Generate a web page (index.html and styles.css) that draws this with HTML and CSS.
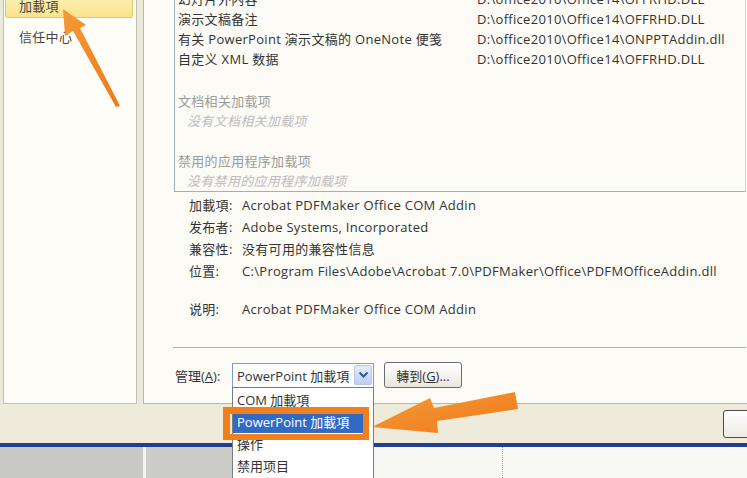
FILE: index.html
```html
<!DOCTYPE html>
<html lang="zh-CN">
<head>
    <meta charset="UTF-8">
    <meta name="viewport" content="width=device-width, initial-scale=1.0">
    <title>PowerPoint 选项 - 加载项</title>
    <link rel="stylesheet" href="styles.css">
</head>
<body>
    <div class="screen">
        <div class="dialog">
            <aside class="nav">
                <div class="nav-item selected">加載項</div>
                <div class="nav-item">信任中心</div>
            </aside>

            <main class="panel">
                <div class="addin-list">
                    <div class="row"><span class="name">幻灯片外内容</span><span class="path">D:\office2010\Office14\OFFRHD.DLL</span></div>
                    <div class="row"><span class="name">演示文稿备注</span><span class="path">D:\office2010\Office14\OFFRHD.DLL</span></div>
                    <div class="row"><span class="name">有关 PowerPoint 演示文稿的 OneNote 便笺</span><span class="path">D:\office2010\Office14\ONPPTAddin.dll</span></div>
                    <div class="row"><span class="name">自定义 XML 数据</span><span class="path">D:\office2010\Office14\OFFRHD.DLL</span></div>

                    <div class="group first">文档相关加载项</div>
                    <div class="empty">没有文档相关加载项</div>
                    <div class="group">禁用的应用程序加载项</div>
                    <div class="empty">没有禁用的应用程序加载项</div>
                </div>

                <div class="details">
                    <div class="detail"><span class="label">加載項:</span><span>Acrobat PDFMaker Office COM Addin</span></div>
                    <div class="detail"><span class="label">发布者:</span><span>Adobe Systems, Incorporated</span></div>
                    <div class="detail"><span class="label">兼容性:</span><span>没有可用的兼容性信息</span></div>
                    <div class="detail"><span class="label">位置:</span><span>C:\Program Files\Adobe\Acrobat 7.0\PDFMaker\Office\PDFMOfficeAddin.dll</span></div>
                    <div class="detail desc"><span class="label">说明:</span><span>Acrobat PDFMaker Office COM Addin</span></div>
                </div>

                <div class="manage">
                    <span class="manage-label">管理(<u>A</u>):</span>
                    <div class="combo">
                        <span class="combo-text">PowerPoint 加載項</span>
                        <span class="combo-btn">
                            <svg width="11" height="8" viewBox="0 0 11 8"><polyline points="1.5,1.5 5.5,5.5 9.5,1.5" fill="none" stroke="#3b5787" stroke-width="2"/></svg>
                        </span>
                    </div>
                    <button class="go-btn">轉到(<u>G</u>)...</button>
                </div>
            </main>
        </div>

        <div class="footer">
            <button class="footer-btn"></button>
        </div>
        <div class="blue-line"></div>
        <div class="below">
            <div class="below-a"></div>
            <div class="below-sep"></div>
            <div class="below-b"></div>
            <div class="below-c"></div>
            <div class="below-d"></div>
        </div>

        <!-- open dropdown of the manage combobox -->
        <ul class="dropdown">
            <li class="opt">COM 加載項</li>
            <li class="opt active">PowerPoint 加載項</li>
            <li class="opt">操作</li>
            <li class="opt">禁用项目</li>
        </ul>

        <!-- annotation marks -->
        <div class="mark-box"></div>
        <svg class="marks" width="747" height="478" viewBox="0 0 747 478">
            <defs>
                <linearGradient id="og" x1="0" y1="0" x2="1" y2="1">
                    <stop offset="0" stop-color="#f59a3a"/>
                    <stop offset="1" stop-color="#ee7a18"/>
                </linearGradient>
            </defs>
            <polygon points="63,9 86,25 80,28 120,106 116,107 73,31 65,36" fill="url(#og)"/>
            <polygon points="372,427 430,398 434,408 515,392 518,409 437,421 438,433" fill="url(#og)"/>
        </svg>
    </div>
</body>
</html>
```

FILE: styles.css
```css
* {
    box-sizing: border-box;
}
body {
    margin: 0;
    width: 747px;
    height: 478px;
    overflow: hidden;
    background-color: #f0ede2;
    font-family: "Open Sans", "Noto Sans CJK SC", sans-serif;
    font-size: 13px;
    letter-spacing: 0.3px;
    color: #333;
}
.screen {
    position: relative;
    width: 747px;
    height: 478px;
    overflow: hidden;
}
.dialog {
    display: flex;
    height: 404px;
    padding-left: 3px;
    gap: 6px;
    background-color: #ebe8dc;
}
.nav {
    width: 134px;
    flex-shrink: 0;
    border: 1px solid #c3c0b1;
    border-top: none;
    background-color: #fffdf7;
    padding: 0 3px 0 1px;
}
.nav-item {
    height: 24px;
    line-height: 22px;
    padding-left: 13px;
    border: 1px solid transparent;
    color: #444;
    margin-bottom: 7px;
}
.nav-item.selected {
    margin-top: -6px;
    background: linear-gradient(#fdf3b8, #fbe28b);
    border-color: #e9c462;
    border-radius: 2px;
}
.panel {
    flex: 1;
    border-left: 1px solid #bab7a9;
    border-bottom: 1px solid #bab7a9;
    background-color: #fcfbf6;
    padding: 0 1px 0 30px;
}
.addin-list {
    margin-top: -12px;
    border: 1px solid #a7adb4;
    border-right-color: #d6d8da;
    padding-left: 3px;
}
.row {
    display: flex;
    line-height: 20px;
    white-space: nowrap;
}
.name {
    width: 299px;
    flex-shrink: 0;
}
.group {
    line-height: 20px;
    color: #9b9b9b;
    margin-top: 20px;
}
.group.first {
    margin-top: 22px;
}
.empty {
    line-height: 20px;
    color: #bcbcbc;
    font-style: italic;
    padding-left: 9px;
}
.details {
    margin-top: 2px;
    padding-left: 15px;
}
.detail {
    display: flex;
    line-height: 22px;
    white-space: nowrap;
}
.detail.desc {
    margin-top: 16px;
}
.label {
    width: 53px;
    flex-shrink: 0;
}
.manage {
    display: flex;
    align-items: center;
    margin-top: 27px;
    margin-left: -1px;
    border-top: 1px solid #b5b2a5;
    padding-top: 14px;
    padding-left: 2px;
}
.manage-label {
    width: 57px;
    letter-spacing: 0;
}
.combo {
    display: flex;
    align-items: center;
    width: 142px;
    height: 25px;
    border: 1px solid #7f9db9;
    background-color: #fff;
}
.combo-text {
    flex: 1;
    padding-left: 4px;
    white-space: nowrap;
    letter-spacing: 0;
}
.combo-btn {
    width: 18px;
    height: 20px;
    margin-right: 1px;
    display: flex;
    align-items: center;
    justify-content: center;
    background: linear-gradient(#e3ebfb, #bccff4);
    border: 1px solid #b4c6ea;
    border-radius: 2px;
}
.go-btn {
    margin-left: 10px;
    width: 78px;
    height: 26px;
    font: inherit;
    letter-spacing: 0;
    color: #333;
    border: 1px solid #6d6d6d;
    border-radius: 3px;
    background: linear-gradient(#ffffff, #e9e7dd);
}
.footer {
    height: 39px;
    background-color: #efebda;
    display: flex;
    align-items: center;
    justify-content: flex-end;
}
.footer-btn {
    width: 40px;
    height: 28px;
    margin-right: -16px;
    border: 1px solid #4b4b4b;
    border-radius: 3px;
    background: linear-gradient(#ffffff, #eceae2);
}
.blue-line {
    height: 4px;
    background-color: #213f92;
}
.below {
    display: flex;
    height: 31px;
}
.below-a {
    width: 143px;
    background-color: #c8c8c4;
}
.below-sep {
    width: 3px;
    background-color: #f3f3ef;
}
.below-b {
    width: 226px;
    background-color: #cbcbc7;
}
.below-c {
    width: 131px;
    background-color: #f7f7f4;
    border-right: 1px dotted #a9a9a9;
}
.below-d {
    flex: 1;
    background-color: #f8f8f5;
}
.dropdown {
    position: absolute;
    left: 232px;
    top: 387px;
    width: 142px;
    height: 100px;
    margin: 0;
    padding: 1px 0 0;
    list-style: none;
    background-color: #fff;
    border: 1px solid #7c7c7c;
    letter-spacing: 0;
}
.opt {
    height: 22px;
    line-height: 22px;
    padding-left: 4px;
    white-space: nowrap;
}
.opt.active {
    background-color: #316ac5;
    color: #fff;
    margin-right: 6px;
}
.mark-box {
    position: absolute;
    left: 223px;
    top: 407px;
    width: 146px;
    height: 33px;
    border: 7px solid #f07f1c;
    border-right-width: 6px;
    border-bottom-width: 6px;
}
.marks {
    position: absolute;
    left: 0;
    top: 0;
    pointer-events: none;
}
```
